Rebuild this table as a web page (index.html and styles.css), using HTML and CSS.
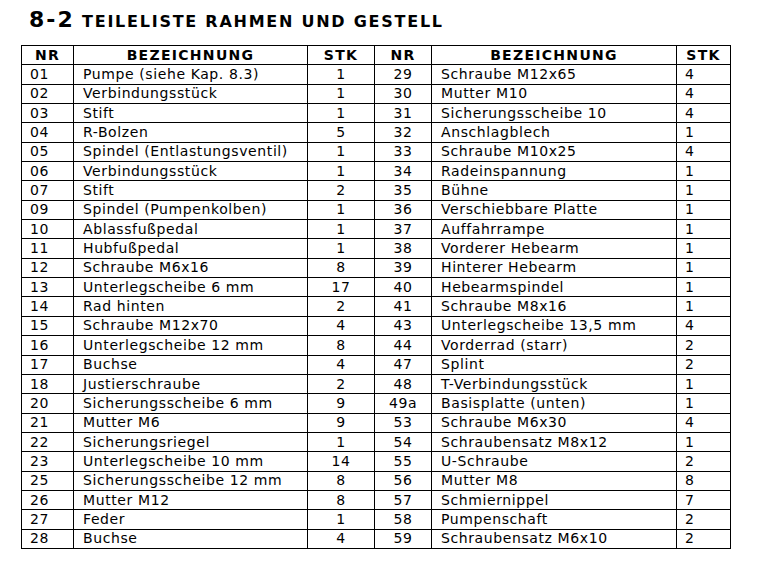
FILE: index.html
```html
<!DOCTYPE html>
<html lang="de">
<head>
<meta charset="utf-8">
<title>8-2 Teileliste Rahmen und Gestell</title>
<link rel="stylesheet" href="styles.css">
</head>
<body>
<div class="page">
  <h1 class="title"><span class="num">8-2</span> TEILELISTE RAHMEN UND GESTELL</h1>
  <table class="parts">
    <colgroup>
      <col class="c-nr1"><col class="c-bez1"><col class="c-stk1">
      <col class="c-nr2"><col class="c-bez2"><col class="c-stk2">
    </colgroup>
    <thead>
      <tr><th>NR</th><th>BEZEICHNUNG</th><th>STK</th><th>NR</th><th>BEZEICHNUNG</th><th>STK</th></tr>
    </thead>
    <tbody>
      <tr><td class="nr1">01</td><td class="bez">Pumpe (siehe Kap. 8.3)</td><td class="stk1">1</td><td class="nr2">29</td><td class="bez">Schraube M12x65</td><td class="stk2">4</td></tr>
      <tr><td class="nr1">02</td><td class="bez">Verbindungsstück</td><td class="stk1">1</td><td class="nr2">30</td><td class="bez">Mutter M10</td><td class="stk2">4</td></tr>
      <tr><td class="nr1">03</td><td class="bez">Stift</td><td class="stk1">1</td><td class="nr2">31</td><td class="bez">Sicherungsscheibe 10</td><td class="stk2">4</td></tr>
      <tr><td class="nr1">04</td><td class="bez">R-Bolzen</td><td class="stk1">5</td><td class="nr2">32</td><td class="bez">Anschlagblech</td><td class="stk2">1</td></tr>
      <tr><td class="nr1">05</td><td class="bez">Spindel (Entlastungsventil)</td><td class="stk1">1</td><td class="nr2">33</td><td class="bez">Schraube M10x25</td><td class="stk2">4</td></tr>
      <tr><td class="nr1">06</td><td class="bez">Verbindungsstück</td><td class="stk1">1</td><td class="nr2">34</td><td class="bez">Radeinspannung</td><td class="stk2">1</td></tr>
      <tr><td class="nr1">07</td><td class="bez">Stift</td><td class="stk1">2</td><td class="nr2">35</td><td class="bez">Bühne</td><td class="stk2">1</td></tr>
      <tr><td class="nr1">09</td><td class="bez">Spindel (Pumpenkolben)</td><td class="stk1">1</td><td class="nr2">36</td><td class="bez">Verschiebbare Platte</td><td class="stk2">1</td></tr>
      <tr><td class="nr1">10</td><td class="bez">Ablassfußpedal</td><td class="stk1">1</td><td class="nr2">37</td><td class="bez">Auffahrrampe</td><td class="stk2">1</td></tr>
      <tr><td class="nr1">11</td><td class="bez">Hubfußpedal</td><td class="stk1">1</td><td class="nr2">38</td><td class="bez">Vorderer Hebearm</td><td class="stk2">1</td></tr>
      <tr><td class="nr1">12</td><td class="bez">Schraube M6x16</td><td class="stk1">8</td><td class="nr2">39</td><td class="bez">Hinterer Hebearm</td><td class="stk2">1</td></tr>
      <tr><td class="nr1">13</td><td class="bez">Unterlegscheibe 6 mm</td><td class="stk1">17</td><td class="nr2">40</td><td class="bez">Hebearmspindel</td><td class="stk2">1</td></tr>
      <tr><td class="nr1">14</td><td class="bez">Rad hinten</td><td class="stk1">2</td><td class="nr2">41</td><td class="bez">Schraube M8x16</td><td class="stk2">1</td></tr>
      <tr><td class="nr1">15</td><td class="bez">Schraube M12x70</td><td class="stk1">4</td><td class="nr2">43</td><td class="bez">Unterlegscheibe 13,5 mm</td><td class="stk2">4</td></tr>
      <tr><td class="nr1">16</td><td class="bez">Unterlegscheibe 12 mm</td><td class="stk1">8</td><td class="nr2">44</td><td class="bez">Vorderrad (starr)</td><td class="stk2">2</td></tr>
      <tr><td class="nr1">17</td><td class="bez">Buchse</td><td class="stk1">4</td><td class="nr2">47</td><td class="bez">Splint</td><td class="stk2">2</td></tr>
      <tr><td class="nr1">18</td><td class="bez">Justierschraube</td><td class="stk1">2</td><td class="nr2">48</td><td class="bez">T-Verbindungsstück</td><td class="stk2">1</td></tr>
      <tr><td class="nr1">20</td><td class="bez">Sicherungsscheibe 6 mm</td><td class="stk1">9</td><td class="nr2">49a</td><td class="bez">Basisplatte (unten)</td><td class="stk2">1</td></tr>
      <tr><td class="nr1">21</td><td class="bez">Mutter M6</td><td class="stk1">9</td><td class="nr2">53</td><td class="bez">Schraube M6x30</td><td class="stk2">4</td></tr>
      <tr><td class="nr1">22</td><td class="bez">Sicherungsriegel</td><td class="stk1">1</td><td class="nr2">54</td><td class="bez">Schraubensatz M8x12</td><td class="stk2">1</td></tr>
      <tr><td class="nr1">23</td><td class="bez">Unterlegscheibe 10 mm</td><td class="stk1">14</td><td class="nr2">55</td><td class="bez">U-Schraube</td><td class="stk2">2</td></tr>
      <tr><td class="nr1">25</td><td class="bez">Sicherungsscheibe 12 mm</td><td class="stk1">8</td><td class="nr2">56</td><td class="bez">Mutter M8</td><td class="stk2">8</td></tr>
      <tr><td class="nr1">26</td><td class="bez">Mutter M12</td><td class="stk1">8</td><td class="nr2">57</td><td class="bez">Schmiernippel</td><td class="stk2">7</td></tr>
      <tr><td class="nr1">27</td><td class="bez">Feder</td><td class="stk1">1</td><td class="nr2">58</td><td class="bez">Pumpenschaft</td><td class="stk2">2</td></tr>
      <tr><td class="nr1">28</td><td class="bez">Buchse</td><td class="stk1">4</td><td class="nr2">59</td><td class="bez">Schraubensatz M6x10</td><td class="stk2">2</td></tr>
    </tbody>
  </table>
</div>
</body>
</html>
```

FILE: styles.css
```css
html, body {
  margin: 0;
  padding: 0;
  background: #ffffff;
}

.page {
  padding: 8px 0 0 21px;
  font-family: "DejaVu Sans", Verdana, sans-serif;
  color: #000000;
}

.title {
  margin: 0 0 0 8px;
  height: 30px;
  font-size: 16px;
  font-weight: bold;
  line-height: 24px;
  letter-spacing: 1.75px;
  white-space: nowrap;
}

.title .num {
  font-size: 22px;
  letter-spacing: 2px;
}

.parts {
  margin-top: 7px;
  border-collapse: collapse;
  table-layout: fixed;
  width: 709px;
  font-size: 14px;
  letter-spacing: 0.6px;
}

.c-nr1 { width: 52px; }
.c-bez1 { width: 234px; }
.c-stk1 { width: 67px; }
.c-nr2 { width: 57px; }
.c-bez2 { width: 245px; }
.c-stk2 { width: 54px; }

.parts tr {
  height: 19.35px;
}

.parts th,
.parts td {
  border: 1px solid #000000;
  padding: 0;
  line-height: 17px;
  white-space: nowrap;
  overflow: hidden;
}

.parts th {
  font-weight: bold;
  text-align: center;
  letter-spacing: 1.3px;
}

.parts .nr1 {
  text-align: left;
  padding-left: 8px;
}

.parts .bez {
  text-align: left;
  padding-left: 9px;
}

.parts .stk1 {
  text-align: center;
}

.parts .nr2 {
  text-align: center;
}

.parts .stk2 {
  text-align: left;
  padding-left: 8px;
}
```
